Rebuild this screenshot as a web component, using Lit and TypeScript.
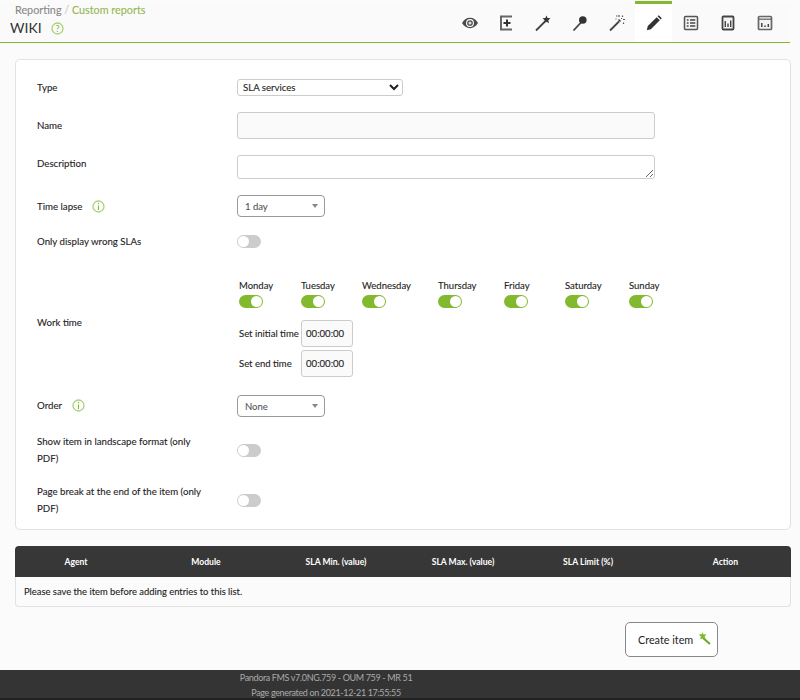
import { LitElement, html, css, svg } from 'lit';
import { customElement } from 'lit/decorators.js';

const DAYS = ['Monday', 'Tuesday', 'Wednesday', 'Thursday', 'Friday', 'Saturday', 'Sunday'];
const COLUMNS = ['Agent', 'Module', 'SLA Min. (value)', 'SLA Max. (value)', 'SLA Limit (%)', 'Action'];

const TAB_ICONS = [
    svg`<g transform="translate(1 0)"><path d="M1 9c2-3.400 4.800-5.200 8-5.200s6 1.800 8 5.200c-2 3.400-4.800 5.200-8 5.200S3 12.400 1 9z" fill="#4a4a4a"/><circle cx="9" cy="9" r="3.400" fill="none" stroke="#fff" stroke-width="1.100"/><circle cx="9" cy="9" r="1.600" fill="#ddd"/></g>`,
    svg`<path d="M15 2.500H4v13h11" fill="none" stroke="#666" stroke-width="2"/><path d="M10 5.500v7M6.500 9h7" stroke="#333" stroke-width="2"/>`,
    svg`<path d="M2 16.500L11 7.500" stroke="#444" stroke-width="1.800"/><path d="M12.500 1.500l1 2.500 3 .2-2.200 2 .7 3-2.500-1.500-2.600 1.400.7-2.900-2.100-2 2.900-.2z" fill="#333"/>`,
    svg`<path d="M2.500 16.500L10 8.500" stroke="#444" stroke-width="1.800"/><circle cx="11.800" cy="6" r="3.800" fill="#333"/>`,
    svg`<path d="M2 16.500L11 7.500" stroke="#444" stroke-width="1.800"/><path d="M10 6l2 2 1-1-2-2z" fill="#333"/><path d="M8 2h1.500M11 1v2M14.500 1.500v1.500M15 5.500h2M13 4.500h1M15.500 8.500v1.500M7.500 5h1" stroke="#555" stroke-width="1.200"/>`,
    svg`<path d="M1.800 16.200l1-4.100 8.900-8.900 3.100 3.100-8.900 8.900z" fill="#333"/><path d="M12.600 2.300l1.200-1.100 3 3-1.100 1.200z" fill="#333"/>`,
    svg`<rect x="2.500" y="2.500" width="13" height="13" rx="1" fill="#f4f4f4" stroke="#555" stroke-width="1.500"/><path d="M4.800 6h1.800M8 6h5.300M4.800 9h1.800M8 9h5.300M4.800 12h1.800M8 12h5.300" stroke="#444" stroke-width="1.400"/>`,
    svg`<rect x="3.500" y="2.500" width="11" height="13" rx="1" fill="#f4f4f4" stroke="#444" stroke-width="1.800"/><path d="M6.300 7v6M9 9.500v3.500M11.700 6.500v6.500" stroke="#444" stroke-width="1.400"/>`,
    svg`<rect x="2.500" y="2.500" width="13" height="13" rx="1" fill="#f4f4f4" stroke="#666" stroke-width="1.700"/><path d="M3 5.200h12" stroke="#666" stroke-width="1.300"/><path d="M5.800 9v4M9 11.500v1.500M12.300 10v3" stroke="#444" stroke-width="1.500"/>`,
];

@customElement('app-root')
export class AppRoot extends LitElement {
    static styles = css`
        :host {
            display: block;
            height: 700px;
            overflow: hidden;
            background: #fbfbfb;
            font-family: Lato, sans-serif;
            font-size: 9.700px;
            color: #222;
            -webkit-text-stroke: 0.1px currentColor;
        }

        .header {
            display: flex;
            justify-content: space-between;
            width: 790px;
            height: 40px;
            margin-top: 3px;
            box-sizing: border-box;
            background: #fafafa;
            border-bottom: 1px solid #82b92e;
            border-top-right-radius: 6px;
        }

        .crumbs {
            padding-left: 15px;
            font-size: 10.800px;
            line-height: 14px;
            color: #888;
        }

        .crumbs span {
            color: #95b750;
        }

        .crumbs i {
            font-style: normal;
            color: #ccc;
        }

        .title {
            display: flex;
            align-items: center;
            gap: 9px;
            margin: 2px 0 0 -5px;
            font-size: 14px;
            line-height: 18px;
            color: #333;
            -webkit-text-stroke: 0;
        }

        .tabs {
            display: flex;
            padding-right: 7px;
        }

        .tab {
            position: relative;
            display: flex;
            width: 37px;
            align-items: center;
            justify-content: center;
            box-sizing: border-box;
        }

        .tab.active {
            background: #fff;
        }

        .tab.active::before {
            content: '';
            position: absolute;
            top: -2px;
            left: 0;
            right: 0;
            height: 3px;
            background: #82b92e;
        }

        .tab svg {
            width: 18px;
            height: 18px;
        }

        .card {
            width: 776px;
            height: 471px;
            margin: 16px 0 0 15px;
            padding: 8px 0 0 21px;
            box-sizing: border-box;
            background: #fff;
            border: 1px solid #e2e2e2;
            border-radius: 5px;
        }

        .row {
            display: flex;
            align-items: center;
            height: 38px;
        }

        .row.r-name {
            height: 39px;
        }

        .row.r-desc {
            height: 40px;
        }

        .row.r-lapse {
            height: 42px;
        }

        .row.r-wrong {
            height: 29px;
        }

        .row.r-work {
            height: 132px;
        }

        .row.r-order {
            height: 35px;
        }

        .row.r-pdf {
            height: 50px;
        }

        .row.r-landscape {
            margin-top: 2px;
        }

        .label {
            display: flex;
            align-items: center;
            gap: 10px;
            width: 170px;
            margin-right: 30px;
            line-height: 17px;
            flex: none;
        }

        .r-desc .label {
            margin-top: -3px;
        }

        .info {
            width: 13px;
            height: 13px;
        }

        select {
            display: block;
            width: 166px;
            height: 17px;
            padding: 0 0 0 1px;
            background: #fff;
            border: 1px solid #ccc;
            border-radius: 3px;
            font: 9.600px Lato, sans-serif;
            color: #222;
        }

        input,
        textarea {
            display: block;
            box-sizing: border-box;
            background: #fafafa;
            border: 1px solid #ccc;
            border-radius: 3px;
            font: 9.600px Lato, sans-serif;
            color: #222;
        }

        .wide {
            width: 418px;
            height: 27px;
        }

        textarea.wide {
            height: 24px;
            margin-top: 3px;
            background: #fff;
        }

        .fake-select {
            position: relative;
            width: 88px;
            height: 22px;
            padding-left: 7px;
            box-sizing: border-box;
            background: #fff;
            border: 1px solid #999;
            border-radius: 4px;
            font-size: 9.500px;
            line-height: 21px;
            color: #555;
        }

        .fake-select::after {
            content: '';
            position: absolute;
            top: 8px;
            right: 6px;
            border: 3px solid transparent;
            border-top: 4px solid #888;
            border-bottom: 0;
        }

        .toggle {
            position: relative;
            width: 24px;
            height: 13px;
            border-radius: 7px;
            background: #ccc;
        }

        .toggle::after {
            content: '';
            position: absolute;
            top: 1px;
            left: 1px;
            width: 11px;
            height: 11px;
            border-radius: 50%;
            background: #fff;
        }

        .toggle.on {
            background: #82b92e;
        }

        .toggle.on::after {
            left: 12px;
        }

        .worktime {
            padding: 13px 0 0 2px;
            font-size: 9.500px;
        }

        .days {
            display: grid;
            grid-template-columns: 62px 61px 76px 66px 61px 64px auto;
            margin-bottom: 10px;
        }

        .day {
            display: flex;
            flex-direction: column;
            gap: 3px;
            line-height: 13px;
        }

        .time {
            display: flex;
            align-items: center;
            height: 30px;
        }

        .time span {
            width: 62px;
            flex: none;
            white-space: nowrap;
        }

        .time input {
            width: 52px;
            height: 27px;
            padding-left: 4px;
        }

        .table {
            width: 776px;
            margin: 16px 0 0 15px;
        }

        .thead {
            display: grid;
            grid-template-columns: 122px 138px 122px 132px 118px 144px;
            height: 31px;
            align-items: center;
            background: #373737;
            border-radius: 4px 4px 0 0;
            font-size: 8.600px;
            font-weight: 700;
            text-align: center;
            color: #fff;
            -webkit-text-stroke: 0;
        }

        .thead div:last-child {
            padding-left: 13px;
        }

        .tbody {
            height: 30px;
            box-sizing: border-box;
            padding-left: 8px;
            background: #fbfbfb;
            border: 1px solid #e2e2e2;
            border-top: 0;
            border-radius: 0 0 4px 4px;
            font-size: 9.400px;
            line-height: 29px;
        }

        .actions {
            display: flex;
            justify-content: flex-end;
            padding: 15px 82px 0 0;
        }

        .create {
            display: flex;
            align-items: center;
            gap: 5px;
            width: 93px;
            height: 35px;
            padding: 0 0 0 12px;
            box-sizing: border-box;
            background: #fff;
            border: 1px solid #888;
            border-radius: 5px;
            font-family: Lato, sans-serif;
            font-size: 10.800px;
            color: #222;
            -webkit-text-stroke: 0;
        }

        .create svg {
            width: 13px;
            height: 13px;
            margin-top: -3px;
        }

        .footer {
            width: 100%;
            height: 30px;
            margin-top: 13px;
            background: #343434;
            border-bottom: 2px solid #222;
            box-sizing: border-box;
            font-size: 9px;
            letter-spacing: -0.350px;
            line-height: 15px;
            color: #aaa;
            -webkit-text-stroke: 0;
        }

        .footer div {
            width: 652px;
            text-align: center;
        }
    `;

    private infoIcon() {
        return html`<svg class="info" viewBox="0 0 13 13">
            <circle cx="6.500" cy="6.500" r="5.500" fill="none" stroke="#a9d17a" stroke-width="1.300"/>
            <path d="M6.500 3v1.200M6.500 5.500V10" stroke="#82b92e" stroke-width="1.100"/>
        </svg>`;
    }

    render() {
        return html`
            <div class="header">
                <div class="crumbs">
                    Reporting <i>/</i> <span>Custom reports</span>
                    <div class="title">
                        WIKI
                        <svg class="info" viewBox="0 0 13 13">
                            <circle cx="6.500" cy="6.500" r="5.500" fill="none" stroke="#a9d17a" stroke-width="1.300"/>
                            <text x="6.500" y="9.800" text-anchor="middle" font-size="9" fill="#82b92e">?</text>
                        </svg>
                    </div>
                </div>
                <div class="tabs">
                    ${TAB_ICONS.map((icon, i) => html`
                        <div class="tab ${i === 5 ? 'active' : ''}">
                            <svg viewBox="0 0 18 18">${icon}</svg>
                        </div>
                    `)}
                </div>
            </div>

            <div class="card">
                <div class="row">
                    <div class="label">Type</div>
                    <select><option>SLA services</option></select>
                </div>
                <div class="row r-name">
                    <div class="label">Name</div>
                    <input class="wide" type="text" />
                </div>
                <div class="row r-desc">
                    <div class="label">Description</div>
                    <textarea class="wide"></textarea>
                </div>
                <div class="row r-lapse">
                    <div class="label">Time lapse ${this.infoIcon()}</div>
                    <div class="fake-select">1 day</div>
                </div>
                <div class="row r-wrong">
                    <div class="label">Only display wrong SLAs</div>
                    <div class="toggle"></div>
                </div>
                <div class="row r-work">
                    <div class="label">Work time</div>
                    <div class="worktime">
                        <div class="days">
                            ${DAYS.map(day => html`
                                <div class="day">${day}<div class="toggle on"></div></div>
                            `)}
                        </div>
                        <div class="time"><span>Set initial time</span><input type="text" value="00:00:00" /></div>
                        <div class="time"><span>Set end time</span><input type="text" value="00:00:00" /></div>
                    </div>
                </div>
                <div class="row r-order">
                    <div class="label">Order ${this.infoIcon()}</div>
                    <div class="fake-select">None</div>
                </div>
                <div class="row r-pdf r-landscape">
                    <div class="label">Show item in landscape format (only PDF)</div>
                    <div class="toggle"></div>
                </div>
                <div class="row r-pdf">
                    <div class="label">Page break at the end of the item (only PDF)</div>
                    <div class="toggle"></div>
                </div>
            </div>

            <div class="table">
                <div class="thead">${COLUMNS.map(col => html`<div>${col}</div>`)}</div>
                <div class="tbody">Please save the item before adding entries to this list.</div>
            </div>

            <div class="actions">
                <button class="create">
                    Create item
                    <svg viewBox="0 0 13 13">
                        <path d="M5 6l7 6" stroke="#6aa52a" stroke-width="2"/>
                        <path d="M4.500 0l1 2.500 3-.3-1.800 2.300 1 2.800L5 6.200 2.200 7.500l.6-3L.8 2.300l3-.1z" fill="#82b92e"/>
                    </svg>
                </button>
            </div>

            <div class="footer">
                <div>Pandora FMS v7.0NG.759 - OUM 759 - MR 51</div>
                <div>Page generated on 2021-12-21 17:55:55</div>
            </div>
        `;
    }
}
